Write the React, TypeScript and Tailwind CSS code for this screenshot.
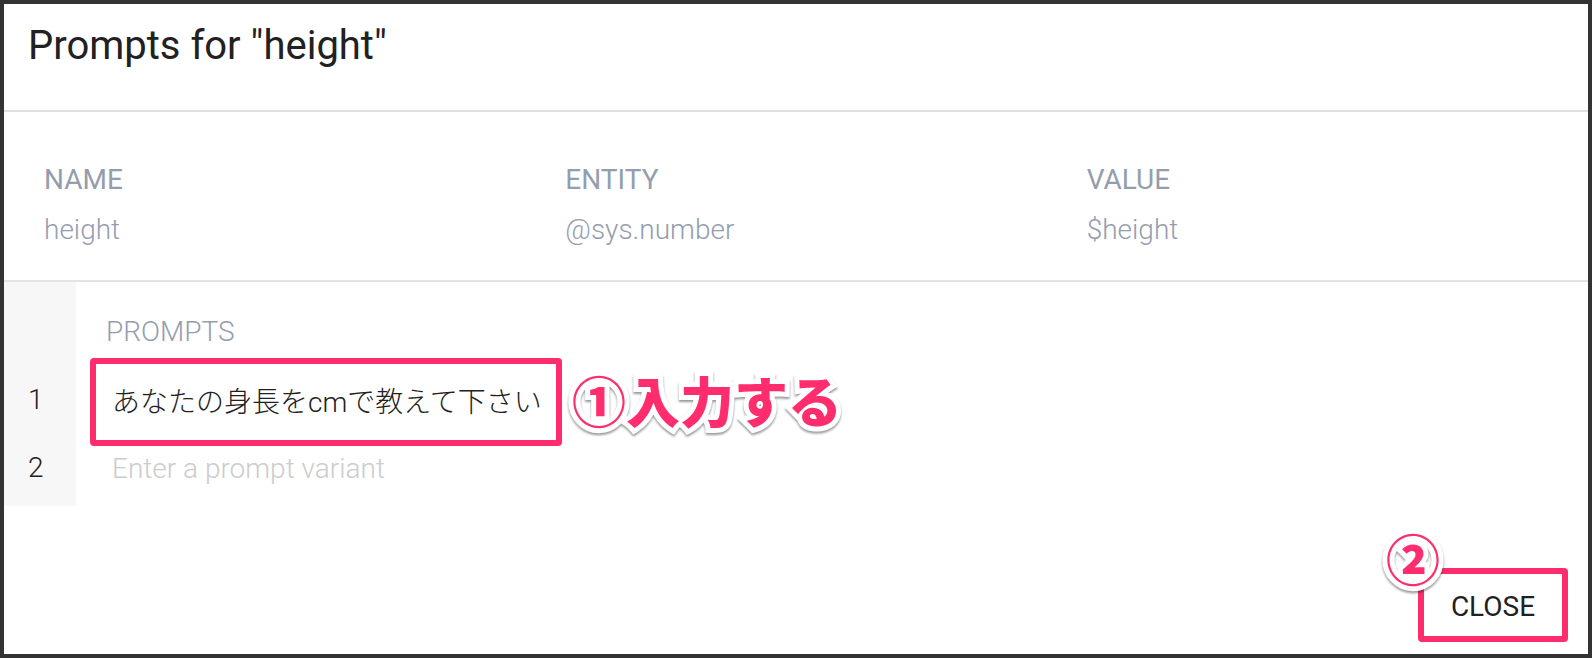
import { useState } from "react";

const details = [
  { term: "NAME", value: "height" },
  { term: "ENTITY", value: "@sys.number" },
  { term: "VALUE", value: "$height" },
];

const noteText =
  "pointer-events-none absolute whitespace-nowrap font-['Noto_Sans_CJK_JP',sans-serif] text-[54px] leading-[60px] font-black text-[#ff2d6e] [-webkit-text-stroke:10px_white] [paint-order:stroke_fill] drop-shadow-[0_2px_1px_rgba(0,0,0,0.4)]";

export default function App() {
  const [prompts, setPrompts] = useState(["あなたの身長をcmで教えて下さい", ""]);

  return (
    <main className="flex min-h-screen flex-col border-4 border-[#333] bg-white font-['Roboto','Noto_Sans_CJK_JP',sans-serif] text-[28px] leading-8 text-[#212121]">
      <header className="border-b-2 border-[#e0e0e0] px-6 pt-[18px] pb-10">
        <h1 className="text-[40px] leading-[48px]">Prompts for "height"</h1>
      </header>

      <dl className="grid grid-cols-3 border-b-2 border-[#e3e3e3] px-2.5 pt-[52px] pb-[34px] text-[#949dad]">
        {details.map((d) => (
          <div key={d.term} className="pl-[30px]">
            <dt>{d.term}</dt>
            <dd className="mt-[18px] font-light">{d.value}</dd>
          </div>
        ))}
      </dl>

      <section className="bg-linear-to-r from-[#f7f7f7] from-[72px] to-white to-[72px] pb-1">
        <h2 className="pt-[34px] pb-[18px] pl-[102px] font-light text-[#949dad]">PROMPTS</h2>
        {prompts.map((prompt, i) => (
          <div key={i} className="relative flex h-[68px] items-center">
            <label htmlFor={`prompt-${i}`} className="w-[72px] pl-6 font-light">
              {i + 1}
            </label>
            <input
              id={`prompt-${i}`}
              value={prompt}
              placeholder="Enter a prompt variant"
              onChange={(e) => setPrompts(prompts.map((p, j) => (j === i ? e.target.value : p)))}
              className="h-12 flex-1 bg-transparent pl-9 font-light outline-none placeholder:text-[#cccccc]"
            />
            {i === 0 && (
              <>
                <div className="pointer-events-none absolute -top-2 left-[86px] h-[88px] w-[472px] rounded-sm border-6 border-[#ff2d6e]" />
                <span className={`${noteText} top-1 left-[568px]`}>①入力する</span>
              </>
            )}
          </div>
        ))}
      </section>

      <footer className="mt-auto flex justify-end pr-5 pb-3">
        <div className="relative">
          <button type="button" className="h-[74px] w-[150px] rounded-sm border-6 border-[#ff2d6e] pt-1">
            CLOSE
          </button>
          <span className={`${noteText} -top-10 -left-8`}>②</span>
        </div>
      </footer>
    </main>
  );
}
